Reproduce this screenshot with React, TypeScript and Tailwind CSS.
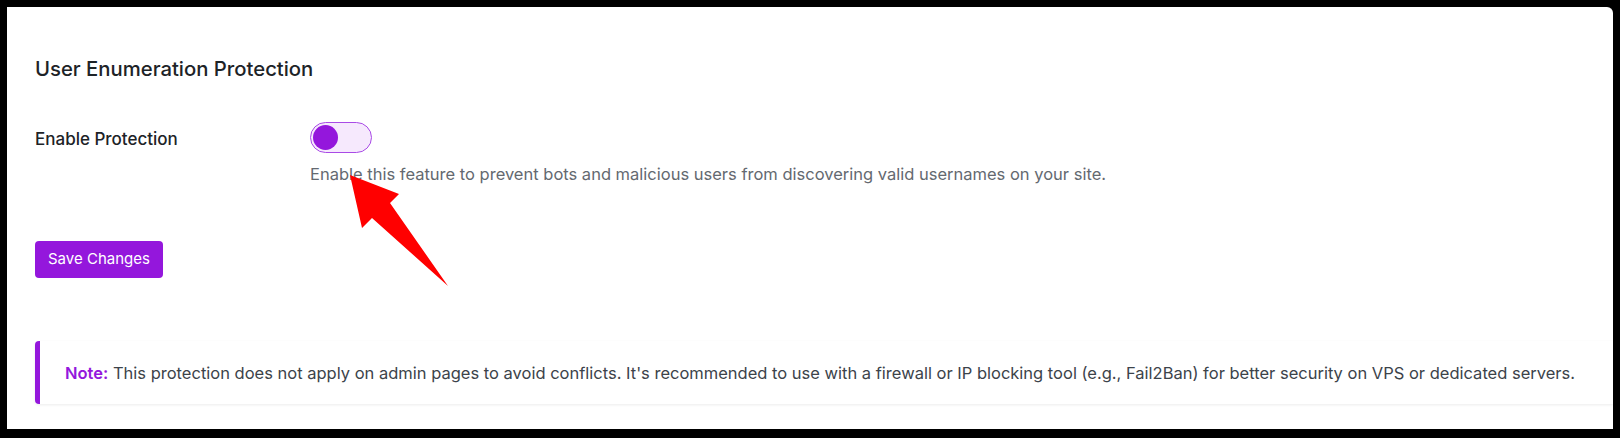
import React from 'react';

const font = { fontFamily: 'Inter, "Noto Sans", sans-serif' };

const Arrow: React.FC = () => (
  <svg className="absolute left-0 top-0 pointer-events-none" width="1620" height="438" viewBox="0 0 1620 438">
    <polygon
      points="350,175 399,194 390,203 448,286 372,218 362,228"
      fill="#ff0000"
    />
  </svg>
);

export default function App() {
  const [enabled, setEnabled] = React.useState(false);

  return (
    <div className="relative w-[1620px] h-[438px] bg-black pt-[7px] pl-[7px] pr-[7px] pb-[9px]" style={font}>
      <div className="h-full bg-white rounded-tr-[6px] pt-[50px] pl-[28px]">
        <h2 className="text-[20.3px] leading-[24px] font-medium text-[#1d2327]">User Enumeration Protection</h2>

        <div className="grid grid-cols-[275px_1fr] mt-[41px]">
          <div className="text-[17px] leading-[35px] font-medium text-[#1d2327]">Enable Protection</div>
          <div>
            <button
              onClick={() => setEnabled(!enabled)}
              className="flex items-center w-[62px] h-[31px] rounded-full border border-[#a94ae6] bg-[#f6e9fd] px-[2px]"
            >
              <span className="block w-[25px] h-[25px] rounded-full bg-[#9417dc]" />
            </button>
            <p className="mt-[11px] text-[16.5px] leading-[20px] text-[#646970]">
              Enable this feature to prevent bots and malicious users from discovering valid usernames on your site.
            </p>
          </div>
        </div>

        <button className="mt-[57px] h-[37px] px-[13px] rounded-[4px] bg-[#9417dc] text-white text-[15px]">
          Save Changes
        </button>

        <div className="mt-[63px] h-[63px] flex items-center border-l-[5px] border-[#9417dc] rounded-l-[4px] bg-white shadow-[0_1px_3px_rgba(0,0,0,0.08)] pl-[25px]">
          <p className="text-[16.5px] leading-[20px] text-[#3c434a]">
            <span className="font-semibold text-[#9417dc]">Note:</span> This protection does not apply on admin pages to avoid conflicts. It's recommended to use with a firewall or IP blocking tool (e.g., Fail2Ban) for better security on VPS or dedicated servers.
          </p>
        </div>
      </div>
      <Arrow />
    </div>
  );
}
